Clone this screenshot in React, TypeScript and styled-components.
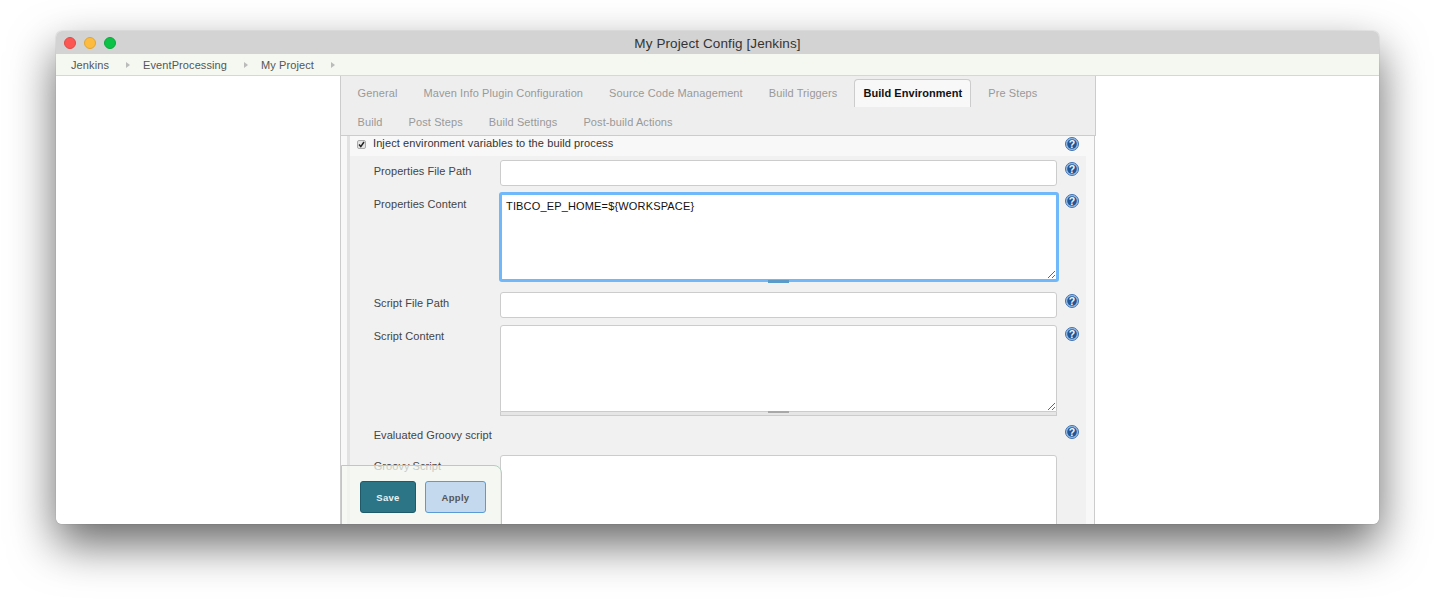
import React from "react";
import styled, { createGlobalStyle } from "styled-components";

const Global = createGlobalStyle`
  html, body { margin: 0; padding: 0; background: #fff; height: 604px; overflow: hidden; }
  * { box-sizing: border-box; }
  body { font-family: "Liberation Sans", Arial, sans-serif; }
`;

const Stage = styled.div`
  padding: 31px 56px 0;
  height: 604px;
`;

const Win = styled.div`
  position: relative;
  height: 493px;
  border-radius: 6px;
  overflow: hidden;
  background: #fff;
  display: flex;
  flex-direction: column;
`;

const WindowShadow = styled.div`
  border-radius: 6px;
  box-shadow: 0 20px 46px rgba(0, 0, 0, 0.6), 0 0 1px rgba(0, 0, 0, 0.45);
`;

const TitleBar = styled.div`
  height: 23px;
  flex: none;
  background: #d3d3d3;
  display: flex;
  align-items: center;
  position: relative;
  padding-left: 8px;
  gap: 8px;
`;

const Light = styled.span<{ $c: string; $b: string }>`
  width: 12px;
  height: 12px;
  border-radius: 50%;
  background: ${(p) => p.$c};
  border: 1px solid ${(p) => p.$b};
`;

const Title = styled.div`
  position: absolute;
  left: 0;
  right: 0;
  top: 5px;
  text-align: center;
  font-size: 13.5px;
  letter-spacing: 0.1px;
  line-height: 15px;
  color: #333;
`;

const Crumbs = styled.div`
  height: 22px;
  flex: none;
  background: #f4f8f1;
  border-bottom: 1px solid #d4dacf;
  display: flex;
  align-items: center;
  padding-left: 15px;
  font-size: 11px;
  color: #555;
`;

const Crumb = styled.span`
  letter-spacing: 0.1px;
`;

const Arrow = styled.span`
  width: 0;
  height: 0;
  border-left: 4px solid #bbb;
  border-top: 3px solid transparent;
  border-bottom: 3px solid transparent;
  margin: 0 13px 0 17px;
`;

const Main = styled.div`
  flex: 1;
  min-height: 0;
  display: grid;
  grid-template-columns: 284px 756px 1fr;
`;

const Column = styled.div`
  grid-column: 2;
  display: flex;
  flex-direction: column;
  min-height: 0;
`;

const Tabs = styled.div`
  height: 60px;
  flex: none;
  background: #eee;
  border-left: 1px solid #ccc;
  border-right: 1px solid #ccc;
  border-bottom: 1px solid #ccc;
  padding: 3px 0 0 7.6px;
  display: flex;
  flex-wrap: wrap;
  align-content: flex-start;
  row-gap: 1px;
`;

const Tab = styled.div<{ $active?: boolean }>`
  height: 28px;
  padding: 0 9px;
  margin-right: 8px;
  font-size: 11px;
  letter-spacing: ${(p) => (p.$active ? "0.06px" : "0.1px")};
  line-height: 29px;
  white-space: nowrap;
  color: ${(p) => (p.$active ? "#111" : "#999")};
  font-weight: ${(p) => (p.$active ? 700 : 400)};
  ${(p) =>
    p.$active
      ? `background:#f8f8f8;border:1px solid #ccc;border-bottom:none;border-radius:4px 4px 0 0;line-height:27px;padding:0 8px;`
      : ""}
`;

const Body = styled.div`
  flex: 1;
  min-height: 0;
  margin-right: 1px;
  border-left: 1px solid #ccc;
  border-right: 1px solid #ccc;
  background: #f8f8f8;
  padding-left: 6px;
  padding-right: 8px;
`;

const Section = styled.div`
  height: 100%;
  border-left: 3px solid #e2e2e2;
  display: flex;
  flex-direction: column;
`;

const Head = styled.div`
  height: 20px;
  flex: none;
  display: flex;
  align-items: center;
  padding: 0 0 6px 7px;
  font-size: 11px;
  letter-spacing: 0.1px;
  color: #333;
  position: relative;
`;

const Check = styled.span`
  width: 9px;
  height: 9px;
  margin: 3px 7px 0 0;
  border-radius: 2px;
  background: #e4e4e4;
  border: 1px solid #aaa;
  display: flex;
  align-items: center;
  justify-content: center;
`;

const Fields = styled.div`
  flex: 1;
  min-height: 0;
  background: #f1f1f1;
  padding-top: 4px;
  display: flex;
  flex-direction: column;
  overflow: hidden;
`;

const Row = styled.div<{ $mb?: number }>`
  display: grid;
  grid-template-columns: 150px 557px 29px;
  margin-bottom: ${(p) => p.$mb ?? 6}px;
  flex: none;
`;

const Label = styled.div<{ $top?: number }>`
  padding: ${(p) => p.$top ?? 4}px 0 0 23.7px;
  font-size: 11px;
  letter-spacing: 0.06px;
  line-height: 14px;
  color: #444;
`;

const HelpCell = styled.div`
  padding: 2px 0 0 7.6px;
`;

const Input = styled.input`
  display: block;
  width: 100%;
  height: 26px;
  border: 1px solid #ccc;
  border-radius: 3px;
  background: #fff;
  outline: none;
  padding: 0 5px;
`;

const AreaWrap = styled.div<{ $focus?: boolean }>`
  position: relative;
  display: flex;
  flex-direction: column;
  ${(p) => (p.$focus ? "margin: 0 -1.5px;" : "")}
`;

const Area = styled.textarea<{ $focus?: boolean; $h: number }>`
  display: block;
  width: 100%;
  height: ${(p) => p.$h}px;
  resize: vertical;
  outline: none;
  background: #fff;
  padding: ${(p) => (p.$focus ? "4px 4.5px" : "6px 5px")};
  font-family: "Liberation Sans", Arial, sans-serif;
  font-size: 11px;
  letter-spacing: 0.16px;
  line-height: 14px;
  color: #111;
  border-radius: ${(p) => (p.$focus ? "3px" : "3px 3px 0 0")};
  border: ${(p) => (p.$focus ? "3px solid #6fb8f9" : "1px solid #ccc")};
`;

const Grip = styled.div<{ $focus?: boolean }>`
  height: 4px;
  background: ${(p) => (p.$focus ? "transparent" : "#e6e6e6")};
  border: ${(p) => (p.$focus ? "none" : "1px solid #ccc")};
  border-top: none;
  margin-top: ${(p) => (p.$focus ? "-3px" : "0")};
  display: flex;
  justify-content: center;
  z-index: 1;
`;

const GripBar = styled.span<{ $focus?: boolean }>`
  width: 21px;
  height: ${(p) => (p.$focus ? "3px" : "2px")};
  margin-top: ${(p) => (p.$focus ? "1px" : "-1px")};
  background: ${(p) => (p.$focus ? "#5b9bc9" : "#a8a8a8")};
`;

const Footer = styled.div`
  position: absolute;
  left: 285px;
  bottom: -4px;
  width: 161px;
  height: 63px;
  background: rgba(244, 248, 241, 0.74);
  border: 1px solid #a9d3bd;
  border-radius: 0 8px 0 0;
  padding: 15px 0 0 18px;
  display: flex;
  align-items: flex-start;
  gap: 9px;
`;

const Btn = styled.button<{ $primary?: boolean }>`
  height: 32px;
  width: ${(p) => (p.$primary ? 56 : 61)}px;
  border-radius: 3px;
  font-family: "Liberation Sans", Arial, sans-serif;
  font-size: 9.5px;
  font-weight: 700;
  letter-spacing: 0.3px;
  padding: 0;
  color: ${(p) => (p.$primary ? "#e8f2f4" : "#555")};
  background: ${(p) => (p.$primary ? "#2b7587" : "#c5d9ee")};
  border: 1px solid ${(p) => (p.$primary ? "#1f5a6a" : "#5b9bd5")};
`;

const HelpSvg = styled.svg`
  display: block;
  width: 14px;
  height: 14px;
`;

const HelpText = styled.text`
  font-family: "Liberation Sans", Arial, sans-serif;
  font-size: 10.5px;
  font-weight: 700;
  fill: #f2f6fb;
`;

const HeadHelp = styled.span`
  position: absolute;
  right: 7.4px;
  top: 1px;
`;

function Help() {
  return (
    <HelpSvg viewBox="0 0 14 14">
      <circle cx="7" cy="7" r="6.5" fill="#9dbde0" stroke="#3f72b3" strokeWidth="1" />
      <circle cx="7" cy="7" r="4.8" fill="#1f5798" />
      <HelpText x="7" y="10.8" textAnchor="middle">?</HelpText>
    </HelpSvg>
  );
}

export default function App() {
  const row1 = ["General", "Maven Info Plugin Configuration", "Source Code Management", "Build Triggers"];
  const row2 = ["Build", "Post Steps", "Build Settings", "Post-build Actions"];
  return (
    <>
      <Global />
      <Stage>
        <WindowShadow>
          <Win>
            <TitleBar>
              <Light $c="#fc5753" $b="#e04a45" />
              <Light $c="#fdbc40" $b="#e0a530" />
              <Light $c="#0bc246" $b="#0aa83c" />
              <Title>My Project Config [Jenkins]</Title>
            </TitleBar>
            <Crumbs>
              <Crumb>Jenkins</Crumb>
              <Arrow />
              <Crumb>EventProcessing</Crumb>
              <Arrow />
              <Crumb>My Project</Crumb>
              <Arrow />
            </Crumbs>
            <Main>
              <Column>
                <Tabs>
                  {row1.map((t) => (
                    <Tab key={t}>{t}</Tab>
                  ))}
                  <Tab $active>Build Environment</Tab>
                  <Tab>Pre Steps</Tab>
                  {row2.map((t) => (
                    <Tab key={t}>{t}</Tab>
                  ))}
                </Tabs>
                <Body>
                  <Section>
                    <Head>
                      <Check>
                        <svg width="7" height="7" viewBox="0 0 7 7">
                          <path d="M1 3.6 L2.8 5.6 L6 1" fill="none" stroke="#222" strokeWidth="1.5" />
                        </svg>
                      </Check>
                      Inject environment variables to the build process
                      <HeadHelp>
                        <Help />
                      </HeadHelp>
                    </Head>
                    <Fields>
                      <Row>
                        <Label>Properties File Path</Label>
                        <Input readOnly />
                        <HelpCell><Help /></HelpCell>
                      </Row>
                      <Row $mb={9}>
                        <Label $top={5}>Properties Content</Label>
                        <AreaWrap $focus>
                          <Area $focus $h={90} readOnly defaultValue={"TIBCO_EP_HOME=${WORKSPACE}"} />
                          <Grip $focus><GripBar $focus /></Grip>
                        </AreaWrap>
                        <HelpCell><Help /></HelpCell>
                      </Row>
                      <Row $mb={7}>
                        <Label>Script File Path</Label>
                        <Input readOnly />
                        <HelpCell><Help /></HelpCell>
                      </Row>
                      <Row $mb={7}>
                        <Label>Script Content</Label>
                        <AreaWrap>
                          <Area $h={87} readOnly />
                          <Grip><GripBar /></Grip>
                        </AreaWrap>
                        <HelpCell><Help /></HelpCell>
                      </Row>
                      <Row $mb={13}>
                        <Label $top={5}>Evaluated Groovy script</Label>
                        <div />
                        <HelpCell><Help /></HelpCell>
                      </Row>
                      <Row>
                        <Label>Groovy Script</Label>
                        <AreaWrap>
                          <Area $h={87} readOnly />
                        </AreaWrap>
                        <div />
                      </Row>
                    </Fields>
                  </Section>
                </Body>
              </Column>
            </Main>
            <Footer>
              <Btn $primary>Save</Btn>
              <Btn>Apply</Btn>
            </Footer>
          </Win>
        </WindowShadow>
      </Stage>
    </>
  );
}
